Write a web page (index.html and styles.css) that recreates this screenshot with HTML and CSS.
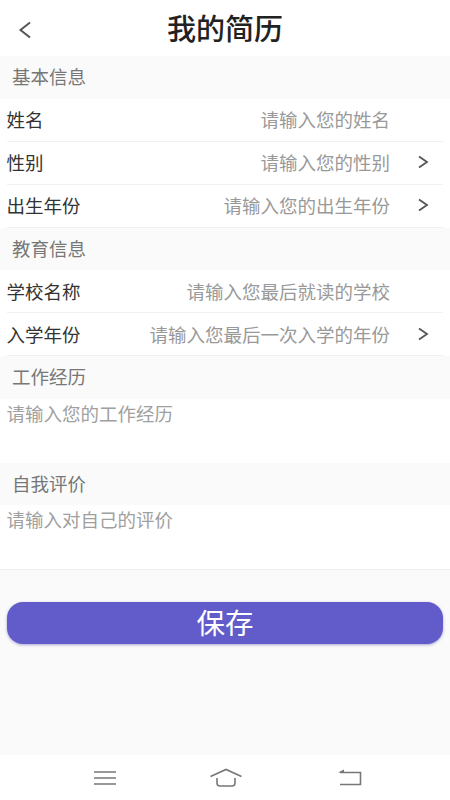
FILE: index.html
```html
<!DOCTYPE html>
<html lang="zh-CN">
<head>
    <meta charset="UTF-8">
    <meta name="viewport" content="width=device-width, initial-scale=1.0">
    <title>我的简历</title>
    <link rel="stylesheet" href="styles.css">
</head>
<body>
    <div class="page">
        <header class="top-bar">
            <svg class="back-icon" viewBox="0 0 16 20" width="16" height="20"><path d="M13 2.5 L3.5 10 L13 17.5"/></svg>
            <h1>我的简历</h1>
        </header>

        <div class="section-title">基本信息</div>
        <div class="row">
            <span class="row-label">姓名</span>
            <span class="row-value">请输入您的姓名</span>
            <span class="arrow-slot"></span>
        </div>
        <div class="row">
            <span class="row-label">性别</span>
            <span class="row-value">请输入您的性别</span>
            <span class="arrow-slot"><svg class="arrow" viewBox="0 0 12 14" width="12" height="14"><path d="M2 1.5 L10 7 L2 12.5"/></svg></span>
        </div>
        <div class="row">
            <span class="row-label">出生年份</span>
            <span class="row-value">请输入您的出生年份</span>
            <span class="arrow-slot"><svg class="arrow" viewBox="0 0 12 14" width="12" height="14"><path d="M2 1.5 L10 7 L2 12.5"/></svg></span>
        </div>

        <div class="section-title">教育信息</div>
        <div class="row">
            <span class="row-label">学校名称</span>
            <span class="row-value">请输入您最后就读的学校</span>
            <span class="arrow-slot"></span>
        </div>
        <div class="row">
            <span class="row-label">入学年份</span>
            <span class="row-value">请输入您最后一次入学的年份</span>
            <span class="arrow-slot"><svg class="arrow" viewBox="0 0 12 14" width="12" height="14"><path d="M2 1.5 L10 7 L2 12.5"/></svg></span>
        </div>

        <div class="section-title">工作经历</div>
        <div class="text-block">请输入您的工作经历</div>

        <div class="section-title">自我评价</div>
        <div class="text-block text-block-last">请输入对自己的评价</div>

        <div class="button-container">
            <button class="save-button">保存</button>
        </div>

        <nav class="nav-bar">
            <svg viewBox="0 0 26 18" width="26" height="18"><path d="M2 3 H24 M2 9 H24 M2 15 H24"/></svg>
            <svg class="home-icon" viewBox="0 0 34 20" width="34" height="20"><path d="M1.5 8.5 L17 1.5 L32.5 8.5 M8 10 V15 Q8 18 11 18 H23 Q26 18 26 15 V10"/></svg>
            <svg viewBox="0 0 26 18" width="26" height="18"><path d="M3 3.5 H23.5 V15.5 H3"/><path class="filled" d="M1 3.5 L7 0.5 V3.5 Z"/></svg>
        </nav>
    </div>
</body>
</html>
```

FILE: styles.css
```css
* {
    box-sizing: border-box;
}

body {
    margin: 0;
    font-family: "Noto Sans CJK SC", "Liberation Sans", sans-serif;
    background-color: #fff;
}

.page {
    width: 450px;
    height: 800px;
    display: flex;
    flex-direction: column;
    background-color: #fafafa;
}

.top-bar {
    height: 56px;
    flex: none;
    display: flex;
    align-items: center;
    justify-content: center;
    padding-bottom: 2px;
    position: relative;
    background-color: #fff;
}

.top-bar h1 {
    margin: 0;
    font-size: 29px;
    font-weight: 500;
    color: #222;
}

.back-icon {
    position: absolute;
    left: 17px;
    top: 20px;
}

.back-icon path {
    fill: none;
    stroke: #555;
    stroke-width: 2;
}

.section-title {
    height: 42.5px;
    flex: none;
    padding-left: 12px;
    font-size: 18.5px;
    line-height: 40px;
    color: #777;
}

.row {
    height: 43px;
    flex: none;
    display: flex;
    align-items: center;
    padding: 0 7px 2px 6.5px;
    background-color: #fff;
    background-image: linear-gradient(#f0f0f0, #f0f0f0);
    background-size: 436px 1px;
    background-position: 7px 100%;
    background-repeat: no-repeat;
}

.row-label {
    font-size: 18.5px;
    color: #333;
}

.row-value {
    flex: 1;
    text-align: right;
    font-size: 18.5px;
    color: #999;
}

.arrow-slot {
    width: 53px;
    flex: none;
    display: flex;
    justify-content: flex-end;
    padding-right: 14px;
}

.arrow path {
    fill: none;
    stroke: #555;
    stroke-width: 1.8;
}

.text-block {
    height: 64px;
    flex: none;
    padding-left: 6.5px;
    font-size: 18.5px;
    line-height: 28px;
    color: #a0a0a0;
    background-color: #fff;
}

.text-block-last {
    height: 65px;
    border-bottom: 1px solid #eee;
}

.button-container {
    flex: 1;
    padding: 32px 7px 0;
}

.save-button {
    display: block;
    width: 100%;
    height: 42px;
    padding: 0 0 2px;
    border: none;
    border-radius: 16px;
    background-color: #615cc9;
    box-shadow: 0 1px 3px rgba(70, 65, 170, 0.45);
    color: #fff;
    font-family: inherit;
    font-size: 28.5px;
    line-height: 40px;
}

.nav-bar {
    height: 45px;
    flex: none;
    display: flex;
    align-items: center;
    justify-content: space-between;
    padding: 0 87px 0 92px;
    background-color: #fff;
}

.home-icon {
    margin-right: 4px;
}

.nav-bar path {
    fill: none;
    stroke: #777;
    stroke-width: 1.6;
}

.nav-bar path.filled {
    fill: #777;
    stroke: none;
}
```
